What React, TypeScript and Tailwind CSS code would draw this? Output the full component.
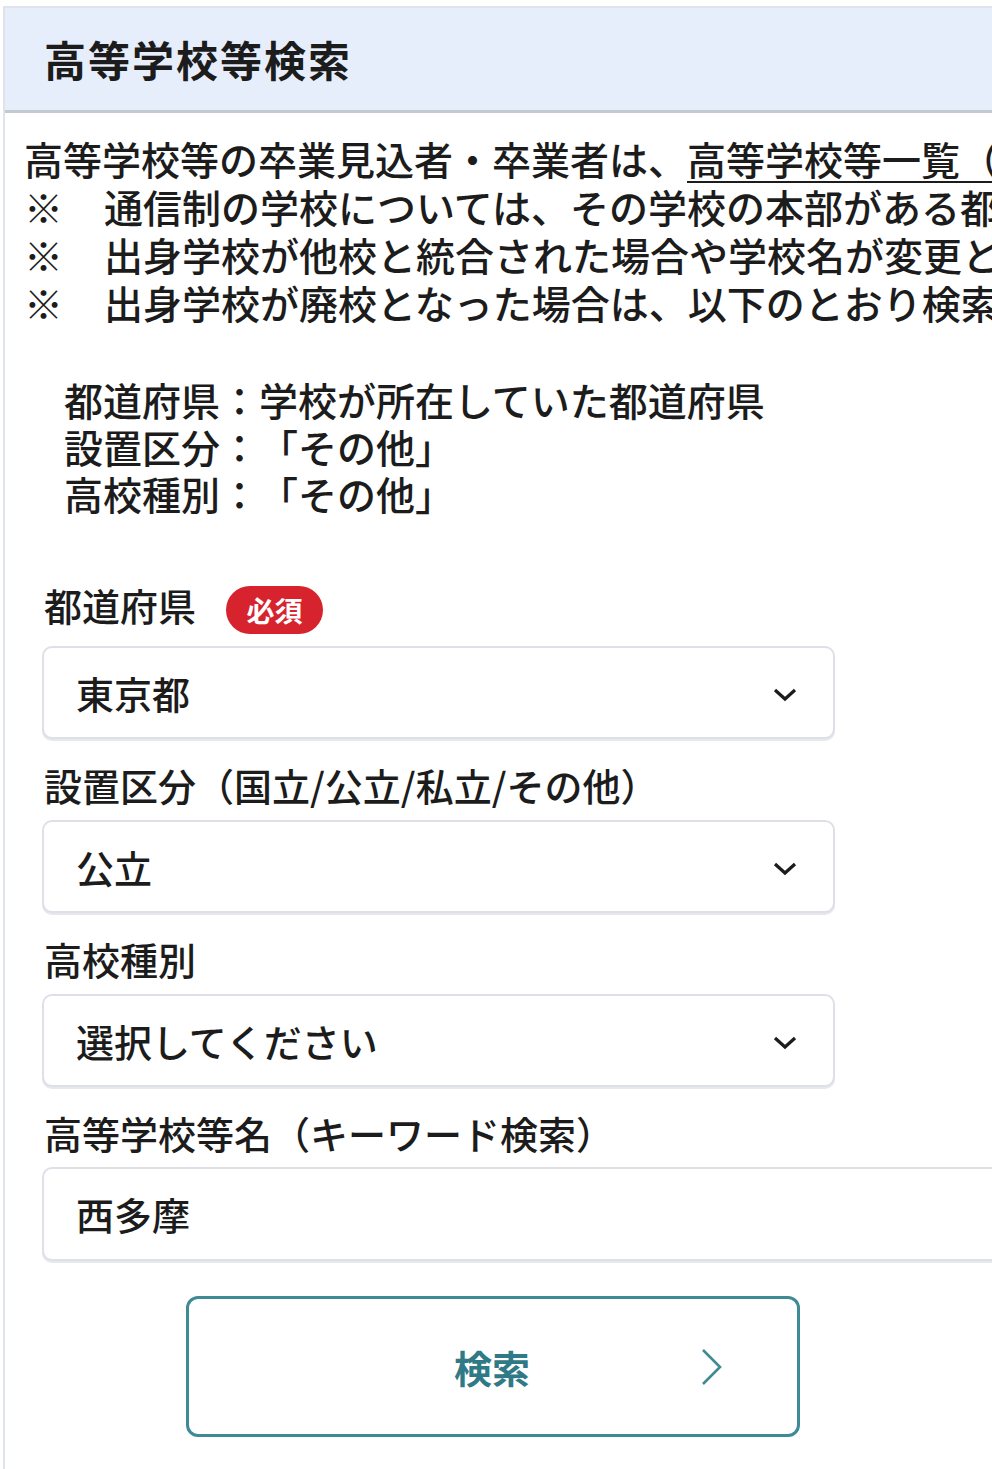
const font = "font-['Noto_Sans_CJK_JP','Noto_Sans',sans-serif]";

const notes = [
  "通信制の学校については、その学校の本部がある都道府県で検索してください。",
  "出身学校が他校と統合された場合や学校名が変更となった場合は、現在の学校名で検索してください。",
  "出身学校が廃校となった場合は、以下のとおり検索してください。",
];

const Chevron = () => (
  <svg width="26" height="16" viewBox="0 0 26 16" className="mt-[4px] shrink-0">
    <polyline points="3,3 13,12 23,3" fill="none" stroke="#1c1c1c" strokeWidth="3.2" strokeLinejoin="miter" />
  </svg>
);

const SelectBox = ({ value }: { value: string }) => (
  <div className="flex h-[93px] w-[793px] items-center justify-between rounded-[10px] border-2 border-[#dde0e6] bg-white pl-[32px] pr-[35px] shadow-[0_2px_0_#e6e8ec]">
    <span className="text-[38px] leading-none font-medium text-[#1c1c1c]">{value}</span>
    <Chevron />
  </div>
);

const Label = ({ children }: { children: React.ReactNode }) => (
  <div className="pl-[2px] text-[38px] leading-[48px] font-medium whitespace-nowrap text-[#1c1c1c]">{children}</div>
);

export default function App() {
  return (
    <div className={`${font} min-h-[1469px] w-full overflow-hidden bg-white [text-spacing-trim:space-all]`}>
      <div className="ml-[3px] mt-[6px] min-h-[1463px] border-t-2 border-l-2 border-[#dfe3ea]">
        <div className="flex h-[105px] items-center border-b-[3px] border-[#c3c8d1] bg-[#e7eefb] pl-[39px]">
          <h1 className="text-[42px] leading-none font-bold tracking-[2px] text-[#1c1c1c]">高等学校等検索</h1>
        </div>

        <div className="pt-[21px] pl-[19px] text-[39px] leading-[48px] font-medium whitespace-nowrap text-[#1c1c1c]">
          <p>
            高等学校等の卒業見込者・卒業者は、
            <span className="underline decoration-2 underline-offset-[6px]">高等学校等一覧（PDF）</span>
            から学校を確認してください。
          </p>
          {notes.map((n) => (
            <p key={n} className="flex">
              <span className="w-[80px] shrink-0">※</span>
              <span>{n}</span>
            </p>
          ))}

          <div className="mt-[50px] ml-[40px] leading-[47px]">
            <p>都道府県：学校が所在していた都道府県</p>
            <p>設置区分：「その他」</p>
            <p>高校種別：「その他」</p>
          </div>
        </div>

        <div className="mt-[64px] pl-[37px]">
          <div className="mb-[12px] flex items-start gap-[30px]">
            <Label>都道府県</Label>
            <span className="mt-[5px] flex h-[48px] w-[97px] items-center justify-center rounded-full bg-[#d7232d] text-[28px] font-bold text-white">
              必須
            </span>
          </div>
          <SelectBox value="東京都" />

          <div className="mt-[22px] mb-[11px]">
            <Label>設置区分（国立/公立/私立/その他）</Label>
          </div>
          <SelectBox value="公立" />

          <div className="mt-[22px] mb-[11px]">
            <Label>高校種別</Label>
          </div>
          <SelectBox value="選択してください" />

          <div className="mt-[22px] mb-[10px]">
            <Label>高等学校等名（キーワード検索）</Label>
          </div>
          <div className="flex h-[94px] w-[1020px] items-center rounded-[10px] border-2 border-[#dde0e6] bg-white pl-[32px] shadow-[0_2px_0_#e6e8ec]">
            <span className="text-[38px] leading-none font-medium text-[#1c1c1c]">西多摩</span>
          </div>

          <div className="mt-[35px] ml-[144px] flex h-[141px] w-[614px] items-center rounded-[12px] border-[3px] border-[#3f8b95] bg-white">
            <span className="ml-[265px] text-[38px] leading-none font-bold text-[#2f7a86]">検索</span>
            <svg width="24" height="38" viewBox="0 0 24 38" className="ml-[170px]">
              <polyline points="3,2 20,19 3,36" fill="none" stroke="#3f8b95" strokeWidth="2.6" />
            </svg>
          </div>
        </div>
      </div>
    </div>
  );
}
